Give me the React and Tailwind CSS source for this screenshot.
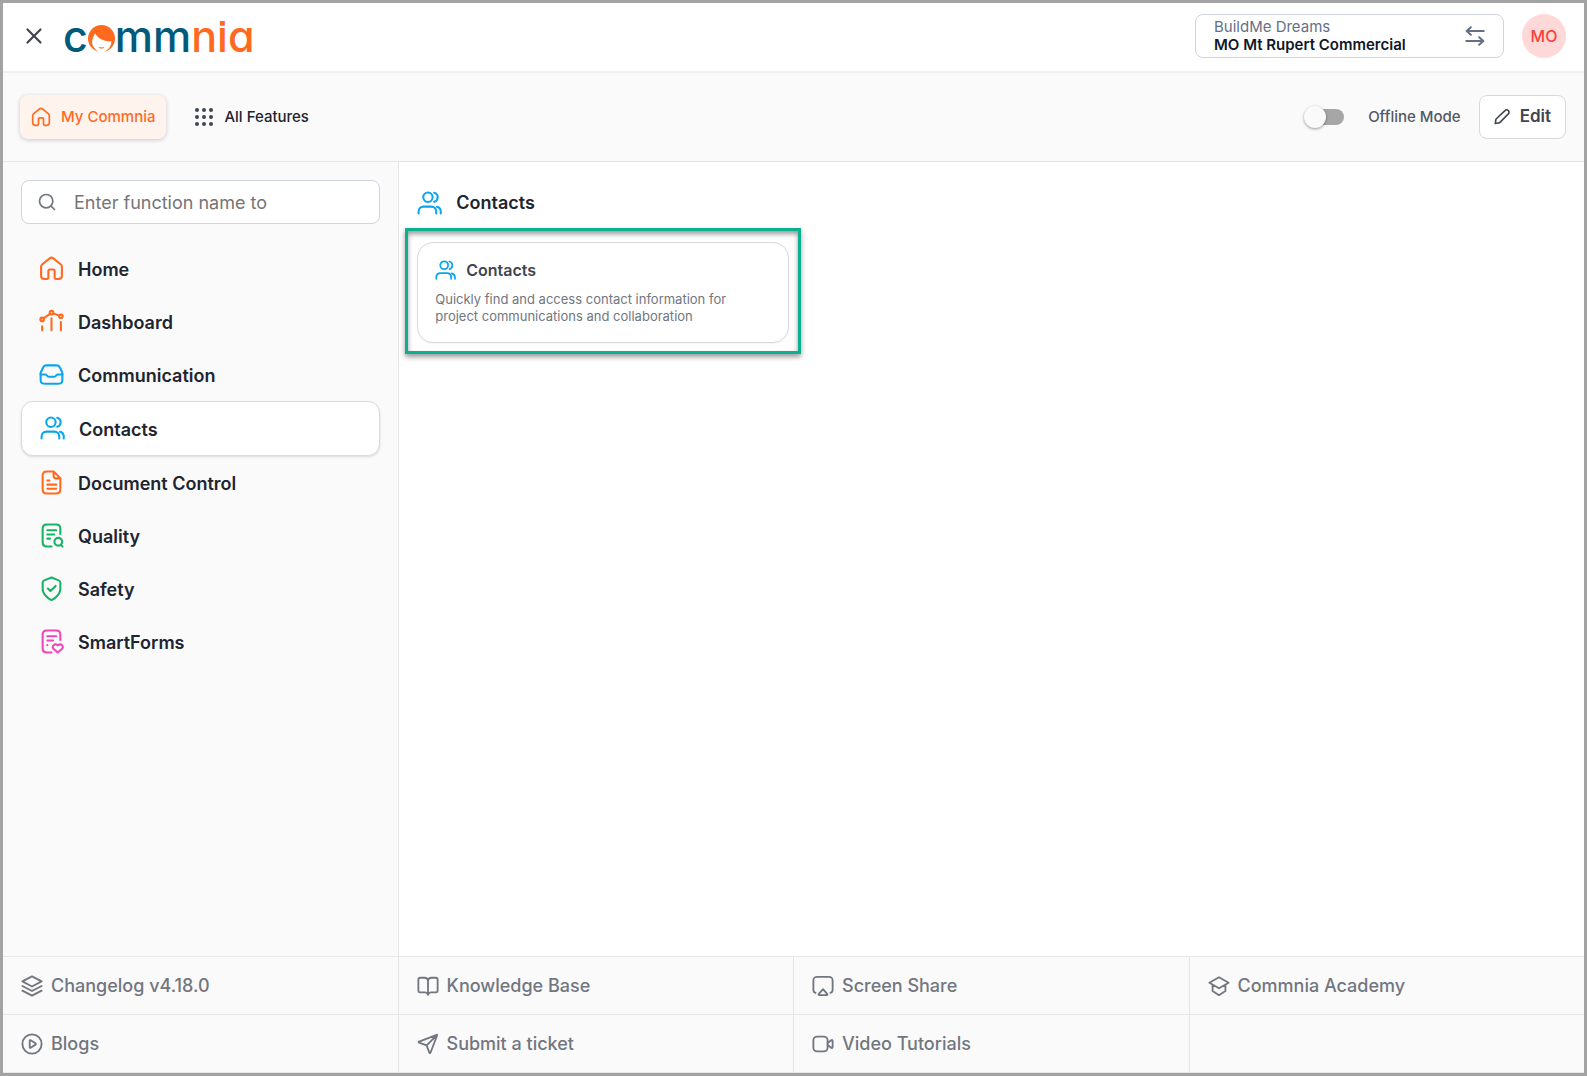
import { Search, X } from 'lucide-react';

const Icon = ({ className, children, strokeWidth = 2 }) => (
  <svg
    viewBox="0 0 24 24"
    fill="none"
    stroke="currentColor"
    strokeWidth={strokeWidth}
    strokeLinecap="round"
    strokeLinejoin="round"
    aria-hidden="true"
    className={`shrink-0 ${className}`}
  >
    {children}
  </svg>
);

const HomeIcon = (props) => (
  <Icon {...props}>
    <path d="M2 10.500c0-1.200.3-1.900 1.200-2.600l7.400-5.800c.9-.7 1.900-.7 2.800 0l7.400 5.800c.9.700 1.200 1.400 1.200 2.600V19c0 2.200-.8 3-3 3h-2.500c-1 0-1.500-.5-1.500-1.500v-6c0-1-.5-1.500-1.500-1.500h-3c-1 0-1.500.5-1.500 1.500v6c0 1-.5 1.500-1.500 1.500H5c-2.200 0-3-.8-3-3z" />
  </Icon>
);

const DashboardIcon = (props) => (
  <Icon {...props}>
    <circle cx="3" cy="10" r="1.700" />
    <circle cx="12" cy="3.500" r="1.700" />
    <circle cx="21" cy="7" r="1.700" />
    <path d="M4.600 8.800 10.600 4.600M13.700 4.200l5.600 2.100M3 16.500v4M12 9v11.500M21 12.500v8" />
  </Icon>
);

const InboxIcon = (props) => (
  <Icon {...props}>
    <path d="M1.500 12h4.380c.76 0 1.450.43 1.790 1.110.34.68 1.030 1.110 1.790 1.110h5.080c.76 0 1.450-.43 1.790-1.110A2 2 0 0 1 18.120 12H22.500" />
    <path d="M7.970 3.200h8.060c1.080 0 1.620 0 2.080.16a3 3 0 0 1 1.100.68c.35.35.59.83 1.070 1.800l1.630 3.250c.19.380.28.570.35.770.06.180.1.360.13.550.03.200.03.420.03.840v4.750c0 1.680 0 2.520-.33 3.160a3 3 0 0 1-1.310 1.310c-.64.330-1.480.330-3.160.330H6.380c-1.680 0-2.520 0-3.160-.33a3 3 0 0 1-1.310-1.310c-.33-.64-.33-1.480-.33-3.160v-4.750c0-.42 0-.63.03-.84.03-.19.070-.370.130-.550.070-.200.160-.390.350-.770l1.630-3.250c.48-.97.72-1.450 1.070-1.800a3 3 0 0 1 1.100-.68c.46-.16 1-.16 2.080-.16z" />
  </Icon>
);

const UsersIcon = (props) => (
  <Icon {...props}>
    <circle cx="10.500" cy="6" r="4.500" />
    <path d="M16.500 1.700a4.500 4.500 0 0 1 0 8.700M1.500 21.500V20c0-3 2-5 4.800-5h7.400c2.800 0 4.800 2 4.800 5v1.500M22.800 21.500V20c0-2.500-1.400-4.200-3.600-4.800" />
  </Icon>
);

const FileIcon = (props) => (
  <Icon {...props}>
    <path d="M14 1.500H7.500C4.500 1.500 3.500 2.500 3.500 5.500v13c0 3 1 4 4 4h9c3 0 4-1 4-4V8L14 1.500V5.500C14 7.300 14.700 8 16.500 8h4M8 10h2M8 14h8.500M8 18h8.500" />
  </Icon>
);

const QualityIcon = (props) => (
  <Icon {...props}>
    <path d="M20.500 10.500v-5c0-3-1-4-4-4h-9c-3 0-4 1-4 4v13c0 3 1 4 4 4H12M8 7h8.500M8 11h6.500M8 15h2.500M22.500 22.500 21 21" />
    <circle cx="18.500" cy="18" r="3.700" />
  </Icon>
);

const SafetyIcon = (props) => (
  <Icon {...props}>
    <path d="M12 23c1 0 8.500-4.300 8.500-11V6.500c0-1.500-.3-1.900-1.600-2.300L12 1.500 5.100 4.200C3.800 4.600 3.500 5 3.500 6.500V12c0 6.700 7.500 11 8.500 11zM8.500 12l2.500 2.500L16 9.500" />
  </Icon>
);

const SmartFormsIcon = (props) => (
  <Icon {...props}>
    <path d="M20.500 10.500v-5c0-3-1-4-4-4h-9c-3 0-4 1-4 4v13c0 3 1 4 4 4H12M8 7h8.500M8 11h5.500M8 15.500h.01" />
    <path d="M18 15.800c-1-1.300-2.900-1.400-4-.3-1 1.100-.8 2.700.1 3.700l3.900 3.300 3.900-3.300c.9-1 1.100-2.600.1-3.700-1.100-1.100-3-1-4 .3z" />
  </Icon>
);

const SwapIcon = (props) => (
  <Icon {...props}>
    <path d="M22.500 6H2M7 1.500 2 6l5 4.500M1.500 18H22M17 13.500l5 4.500-5 4.500" />
  </Icon>
);

const PencilIcon = (props) => (
  <Icon {...props}>
    <path d="M2.500 17.500c.1-.9.150-1.300.300-1.700.200-.500.500-.8 1.100-1.500L16.500 2.400a3.500 3.500 0 0 1 5 5L9.300 19.600c-.700.700-1 .9-1.400 1.100-.400.200-.9.200-1.700.300L2 21.800z" />
  </Icon>
);

const LayersIcon = (props) => (
  <Icon {...props}>
    <path d="m1.500 7 10.500-5.500L22.500 7 12 12.500zM1.500 12 12 17.500 22.500 12M1.500 17 12 22.500 22.500 17" />
  </Icon>
);

const BookIcon = (props) => (
  <Icon {...props}>
    <path d="M12 21.500V7c0-2.500-1.500-4-4-4H3.500C2 3 1.500 3.500 1.500 5v12c0 1.500.5 2 2 2H9c1.500 0 2.200.5 3 2.500.8-2 1.500-2.500 3-2.500h5.500c1.500 0 2-.5 2-2V5c0-1.500-.5-2-2-2H16c-2.500 0-4 1.500-4 4" />
  </Icon>
);

const ScreenIcon = (props) => (
  <Icon {...props}>
    <path d="M4 19.500C2 19 1.500 18 1.500 16V6.500c0-3.500 1-4.500 4.500-4.500h12c3.500 0 4.500 1 4.500 4.500V16c0 2-.5 3-2.500 3.500M12 15.500 7.500 20.500c-.8 1-.4 1.500.7 1.500h7.600c1.100 0 1.500-.5.7-1.500z" />
  </Icon>
);

const AcademyIcon = (props) => (
  <Icon {...props}>
    <path d="M1.500 8.500 12 2.500l10.500 6L12 14.500zM5 11v6.500l7 4.500 7-4.500V11" />
  </Icon>
);

const PlayIcon = (props) => (
  <Icon {...props}>
    <circle cx="12" cy="12" r="10.500" />
    <path d="M9.500 8.500v7c0 .8.5 1 1.100.6l5.200-3.400c.6-.4.6-1 0-1.400l-5.200-3.400c-.6-.4-1.100-.2-1.100.6z" />
  </Icon>
);

const SendIcon = (props) => (
  <Icon {...props}>
    <path d="M10.500 13.500 22 2M10.500 13.500l3 8c.300.800.9.800 1.200 0L22 2.500c.200-.500 0-.7-.5-.5L2.300 9.300c-.8.300-.8.900 0 1.200z" />
  </Icon>
);

const VideoIcon = (props) => (
  <Icon {...props}>
    <rect x="1.500" y="4" width="15.500" height="16" rx="4" />
    <path d="m17 11 4-3c.9-.7 1.500-.4 1.500.6v6.800c0 1-.6 1.300-1.500.6l-4-3" />
  </Icon>
);

const GridIcon = ({ className }) => (
  <svg viewBox="0 0 18 18" fill="currentColor" aria-hidden="true" className={className}>
    {[2, 9, 16].map((y) =>
      [2, 9, 16].map((x) => <circle key={`${x}-${y}`} cx={x} cy={y} r="2" />)
    )}
  </svg>
);

const Logo = () => (
  <a
    href="#home"
    aria-label="commnia"
    className="flex items-baseline text-[43px] leading-none font-medium text-[#005b7a] [font-feature-settings:'cv11','ss07']"
  >
    <span>c</span>
    <svg viewBox="0 0 27 27" aria-hidden="true" className="size-[27px]">
      <circle cx="13.500" cy="13.500" r="13.500" fill="#ff6a1f" />
      <path
        d="M7 8.500c3 4.500 7 7.500 16.500 8-.5 3.500-1.500 6-4 8L16.500 27h-6l-2.500-2c-2.500-2.500-4-5-4-8.500.5-3 1.500-5.500 3-8z"
        fill="#fff"
      />
      <path d="M10.500 22c2 .6 4 .6 6 0-1.500 2-4.500 2-6 0z" fill="#ff6a1f" />
    </svg>
    <span>mm</span>
    <span className="text-[#ff6a1f]">nia</span>
  </a>
);

const navItems = [
  { label: 'Home', icon: HomeIcon, color: 'text-[#ff6a1f]' },
  { label: 'Dashboard', icon: DashboardIcon, color: 'text-[#ff6a1f]' },
  { label: 'Communication', icon: InboxIcon, color: 'text-[#0ba5ec]' },
  { label: 'Contacts', icon: UsersIcon, color: 'text-[#0ba5ec]', active: true },
  { label: 'Document Control', icon: FileIcon, color: 'text-[#ff6a1f]' },
  { label: 'Quality', icon: QualityIcon, color: 'text-[#16b364]' },
  { label: 'Safety', icon: SafetyIcon, color: 'text-[#16b364]' },
  { label: 'SmartForms', icon: SmartFormsIcon, color: 'text-[#ee46bc]' },
];

const footerLinks = [
  { label: 'Changelog v4.18.0', icon: LayersIcon },
  { label: 'Knowledge Base', icon: BookIcon },
  { label: 'Screen Share', icon: ScreenIcon },
  { label: 'Commnia Academy', icon: AcademyIcon },
  { label: 'Blogs', icon: PlayIcon },
  { label: 'Submit a ticket', icon: SendIcon },
  { label: 'Video Tutorials', icon: VideoIcon },
];

const Header = () => (
  <header className="flex h-[70px] items-center border-b-2 border-[#f0f0f0] pr-[18px] pb-0.5 pl-[18px]">
    <button type="button" aria-label="Close menu" className="text-[#404552]">
      <X className="size-[26px]" />
    </button>
    <div className="ml-4">
      <Logo />
    </div>
    <button
      type="button"
      className="ml-auto flex h-11 w-[309px] items-center justify-between rounded-lg border border-[#d0d5dd] px-[18px] text-left"
    >
      <span className="text-[15px] leading-[18px]">
        <span className="block text-[#667085]">BuildMe Dreams</span>
        <span className="block font-semibold text-[#101828]">MO Mt Rupert Commercial</span>
      </span>
      <SwapIcon className="size-5 text-[#667085]" strokeWidth={2.4} />
    </button>
    <button
      type="button"
      aria-label="Account"
      className="ml-[18px] size-11 rounded-full bg-[#ffd9d7] text-base font-medium text-[#f9423a]"
    >
      MO
    </button>
  </header>
);

const Toolbar = () => (
  <div className="flex h-[89px] items-center border-b border-[#e5e5e5] bg-[#fafafa] pr-[18px] pl-[17px] text-[15px]">
    <button
      type="button"
      className="flex h-11 items-center gap-2.5 rounded-lg bg-[#fff4ed] px-[11px] font-medium text-[#ff6a1f] shadow-[0_1px_4px_rgba(16,24,40,0.22)]"
    >
      <HomeIcon className="size-5" />
      My Commnia
    </button>
    <button type="button" className="ml-[29px] flex items-center gap-[11px] font-medium text-[#202430]">
      <GridIcon className="size-[18px] text-[#404552]" />
      All Features
    </button>
    <label className="ml-auto flex items-center gap-6 font-medium text-[#525866]">
      <span className="relative flex h-4 w-[38px] items-center rounded-full bg-[#a6a6a6]">
        <input type="checkbox" role="switch" className="peer sr-only" />
        <span className="-ml-0.5 size-[22px] rounded-full bg-[#fafafa] shadow-[0_1px_3px_rgba(0,0,0,0.4)] peer-checked:ml-auto" />
      </span>
      Offline Mode
    </label>
    <button
      type="button"
      className="ml-[18px] flex h-11 items-center gap-2.5 rounded-lg border border-[#d9d9d9] bg-white px-3.5 text-[17px] font-semibold text-[#404552]"
    >
      <PencilIcon className="size-4" strokeWidth={2.4} />
      Edit
    </button>
  </div>
);

const Sidebar = () => (
  <aside className="w-[calc(25%+1px)] shrink-0 border-r border-[#e5e5e5] bg-[#fafafa] px-[18px] pt-[18px]">
    <div className="flex h-11 items-center gap-[17px] rounded-lg border border-[#d0d5dd] bg-white px-[15px]">
      <Search className="size-5 shrink-0 text-[#717680]" />
      <input
        type="text"
        aria-label="Search functions"
        placeholder="Enter function name to"
        className="h-full min-w-0 flex-1 text-lg outline-none placeholder:text-[#757575]"
      />
    </div>
    <nav className="mt-[18px]">
      {navItems.map(({ label, icon: NavIcon, color, active }) => (
        <a
          key={label}
          href={`#${label.toLowerCase().replace(' ', '-')}`}
          className={
            active
              ? 'flex h-[55px] items-center gap-3.5 rounded-xl border border-[#dcdcdc] bg-white px-[18px] text-lg font-semibold text-[#202430] shadow-sm'
              : 'flex h-[53px] items-center gap-3.5 px-[18px] text-lg font-semibold text-[#202430]'
          }
        >
          <NavIcon className={`size-[25px] ${color}`} />
          <span className="pt-0.5">{label}</span>
        </a>
      ))}
    </nav>
  </aside>
);

const ContactsPage = () => (
  <main className="flex-1 bg-white px-[6px] pt-[27px]">
    <h1 className="flex items-center gap-3.5 pl-3 text-lg font-semibold text-[#202430]">
      <UsersIcon className="size-[25px] text-[#0ba5ec]" />
      Contacts
    </h1>
    <div className="mt-[11px] w-[396px] border-3 border-[#0bb08f] px-[9px] pt-[11px] pb-2 shadow-[0_3px_5px_rgba(0,0,0,0.4),inset_0_3px_5px_rgba(0,0,0,0.4)]">
      <a
        href="#contacts"
        className="block rounded-2xl border border-[#d9d9d9] bg-white px-[17px] pt-[15px] pb-[17px] shadow-xs"
      >
        <h2 className="flex items-center gap-2.5 text-base font-semibold text-[#404552]">
          <UsersIcon className="size-[21px] text-[#0ba5ec]" />
          Contacts
        </h2>
        <p className="mt-[9px] text-[13px] leading-[17px] text-[#717680]">
          Quickly find and access contact information for project communications and collaboration
        </p>
      </a>
    </div>
  </main>
);

const Footer = () => (
  <footer className="grid grid-cols-4 gap-px border-y border-[#e8e8e8] bg-[#e5e5e5]">
    {footerLinks.map(({ label, icon: LinkIcon }) => (
      <a
        key={label}
        href={`#${label.toLowerCase().replaceAll(' ', '-')}`}
        className="flex h-[57px] items-center gap-2 bg-[#fafafa] px-[18px] text-lg font-medium text-[#717680]"
      >
        <LinkIcon className="size-[22px]" />
        {label}
      </a>
    ))}
    <div className="bg-[#fafafa]" />
  </footer>
);

export default function App() {
  return (
    <div className="flex min-h-screen flex-col border-3 border-[#a3a3a3] bg-white font-['Inter',sans-serif] text-base">
      <Header />
      <Toolbar />
      <div className="flex flex-1">
        <Sidebar />
        <ContactsPage />
      </div>
      <Footer />
    </div>
  );
}
